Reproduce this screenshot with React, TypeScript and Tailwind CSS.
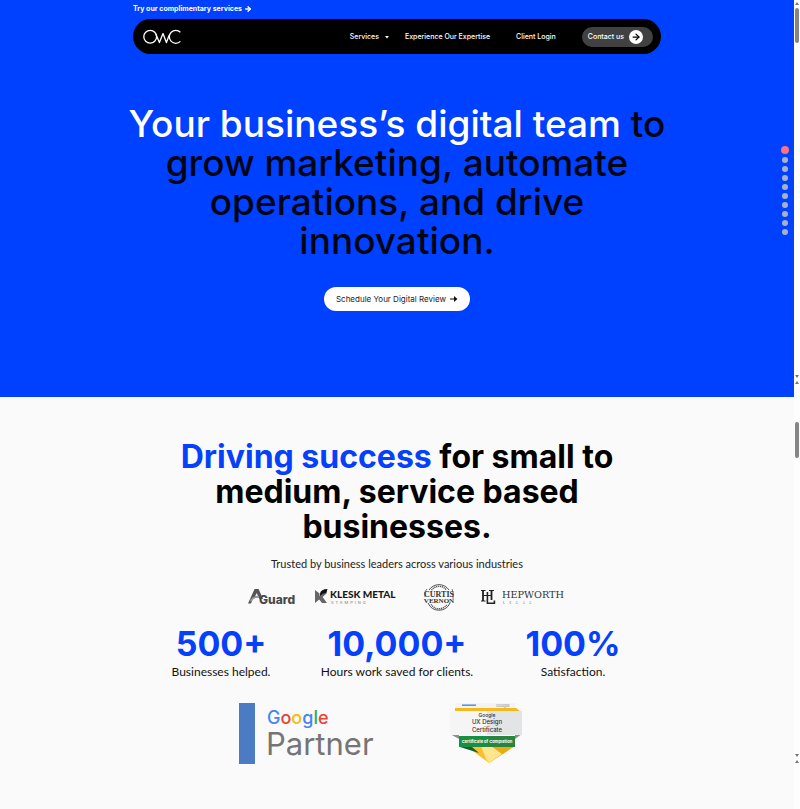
import React from "react";
import { ArrowRight } from "lucide-react";

const sans = "font-['Inter','Liberation_Sans',sans-serif]";
const lato = "font-['Lato','Liberation_Sans',sans-serif]";

function OwcLogo() {
  return (
    <svg viewBox="0 0 38 16" className="h-4 w-[38px]" fill="none" stroke="white" strokeWidth="1.3" role="img" aria-label="OWC">
      <circle cx="7.2" cy="7.8" r="6.4" />
      <path d="M12.8 5 L16.4 13.6 L20 4.6 L23.4 13.6 L26.3 6" strokeLinejoin="round" />
      <path d="M37.4 3.2 A6.5 6.5 0 1 0 37.4 12.4" />
    </svg>
  );
}

function AGuardLogo() {
  return (
    <svg viewBox="0 0 50 20" className="h-5 w-[50px] overflow-visible" role="img" aria-label="AGuard">
      <path d="M0 16.5 L6.6 2 H10.6 L15 12 H11.6 L10.6 10.5 H6.4 Q3.8 13 3 16.5 Z M7.2 9 H10 L8.8 6 Z" fill="#555" fillRule="evenodd" />
      <path d="M2 13 Q6 8 11 9 L11 11 Q6 10 3 15 Z" fill="#999" />
      <text x="11" y="16.6" fontSize="12" fontWeight="800" fill="#484848" className={sans}>Guard</text>
    </svg>
  );
}

function KleskLogo() {
  return (
    <svg viewBox="0 0 82 20" className="h-5 w-[82px] overflow-visible" role="img" aria-label="Klesk Metal Stamping">
      <path d="M0 3 L4.5 6.4 V9 L8 6 H12 L7.6 10 L12 16 H7 L4.2 12.4 L0 16 Z" fill="#666" />
      <path d="M5 6.6 Q6 2 12.5 2 L11.4 6 Q8 5.4 5 9 Z" fill="#111" />
      <text x="15" y="10.6" fontSize="10" fontWeight="900" fill="#181818" className={lato}>KLESK METAL</text>
      <text x="16" y="16.8" fontSize="4" letterSpacing="2" fill="#777" className={sans}>STAMPING</text>
    </svg>
  );
}

function CurtisLogo() {
  return (
    <svg viewBox="0 0 32 26" className="h-[26px] w-8 overflow-visible" role="img" aria-label="Curtis Vernon" fill="none" stroke="#555">
      <path d="M6 6 A12 12 0 0 1 26 6" />
      <path d="M8.5 6 A9.5 9.5 0 0 1 23.5 6" strokeWidth="1.4" strokeDasharray="1.2 .7" />
      <path d="M5 19 A12 12 0 0 0 27 19" />
      <path d="M8 20.4 A9.5 9.5 0 0 0 24 20.4" strokeWidth="1.4" strokeDasharray="1.2 .7" />
      <path d="M4 5 Q0 8 2 13 M29 5 Q31 8 30 15" strokeWidth=".8" />
      <g stroke="none" fill="#333" textAnchor="middle" fontWeight="700" className="font-['Liberation_Serif',serif]">
        <text x="16" y="12.6" fontSize="8">CURTIS</text>
        <text x="16" y="19" fontSize="7">VERNON</text>
      </g>
    </svg>
  );
}

function HepworthLogo() {
  return (
    <svg viewBox="0 0 86 20" className="h-5 w-[86px] overflow-visible" role="img" aria-label="Hepworth Legal">
      <g fill="none" stroke="#222">
        <path d="M3 3.5 V14 M11.5 3.5 V13" strokeWidth="1.8" />
        <path d="M3 8.5 H11 M1 3.5 H5.5 M9 3.5 H14 M1 14 H5.5" strokeWidth="1.2" />
        <path d="M7.4 5 V16.2 H14.4 V13.5" strokeWidth="1.6" />
      </g>
      <text x="22" y="11.4" fontSize="9.7" fill="#333" className="font-['DejaVu_Serif',serif]">HEPWORTH</text>
      <text x="23" y="17.4" fontSize="3" letterSpacing="4.6" fill="#666" className="font-['Liberation_Serif',serif]">LEGAL</text>
    </svg>
  );
}

function PartnerBadge() {
  return (
    <div className="flex h-[61px] w-[138px] gap-[11px]">
      <div className="w-4 shrink-0 bg-[#4a7bc3]" />
      <div className="flex flex-col">
        <span className="pt-1 pl-px text-[18px] leading-[22px] font-medium">
          <span className="text-[#4285f4]">G</span><span className="text-[#ea4335]">o</span><span className="text-[#fbbc05]">o</span><span className="text-[#4285f4]">g</span><span className="text-[#34a853]">l</span><span className="text-[#ea4335]">e</span>
        </span>
        <span className="text-[31px] leading-[30px] text-[#757575]">Partner</span>
      </div>
    </div>
  );
}

function CertificateBadge() {
  return (
    <svg viewBox="0 0 74 62" className="h-[62px] w-[74px]" role="img" aria-label="Google UX Design Certificate, Certificate of Completion">
      <path d="M6 1 H66 V6 H6 Z" fill="#f1f3f4" />
      <path d="M13 3.2 H27" stroke="#5c95e8" strokeWidth="1.6" />
      <text x="47" y="5" fontSize="4" fill="#888" className={sans}>Google</text>
      <path d="M6 6 H67 L71 9 H6 Z" fill="#f6b91c" />
      <path d="M17 44 H66 L40 61 Z" fill="#f9c02d" />
      <path d="M38 44 H66 L40 61 Z" fill="#e9aa19" />
      <path d="M32 44 H42 L53 52 L40 61 L37 57 Z" fill="#ffe58b" />
      <path d="M1 32 H10 V37 Z" fill="#8c9092" />
      <path d="M73 32 H66 V37 Z" fill="#8c9092" />
      <path d="M1 9 H73 V33 H1 Z" fill="#e3e4e6" />
      <path d="M1 9 H38 V33 H1 Z" fill="#f5f5f5" />
      <path d="M11 45 H23 L30 51 Z" fill="#12612c" />
      <path d="M10 34 H66 V45 H10 Z" fill="#188f43" />
      <path d="M38 34 H66 V45 H38 Z" fill="#29843e" />
      <g textAnchor="middle" fill="#333" fontWeight="500" className={sans}>
        <text x="38" y="15.2" fontSize="5">Google</text>
        <text x="38" y="22" fontSize="6">UX Design</text>
        <text x="38" y="29.6" fontSize="6">Certificate</text>
        <text x="38" y="41" fontSize="4.1" fill="white" fontWeight="700">Certificate of Completion</text>
      </g>
    </svg>
  );
}

function ReviewArrow() {
  return (
    <svg viewBox="0 0 8 8" className="size-2" aria-hidden="true">
      <path d="M0 4H5" stroke="#222" strokeWidth="1.1" />
      <path d="M4 1L7.5 4L4 7Z" fill="#111" />
    </svg>
  );
}

function Arrow({ down = false }: { down?: boolean }) {
  return (
    <svg viewBox="0 0 4 3" className="h-[3px] w-1 shrink-0" aria-hidden="true">
      <path d={down ? "M0 0H4L2 3Z" : "M0 3H4L2 0Z"} fill="#777" />
    </svg>
  );
}

function Scrollbar({ thumb }: { thumb: string }) {
  return (
    <div className="flex h-[376px] flex-col items-center" aria-hidden="true">
      <Arrow />
      <div className="flex-1">
        <div className={`w-1 rounded-full bg-[#858585] ${thumb}`} />
      </div>
      <Arrow down />
    </div>
  );
}

const stats = [
  { value: "500+", label: "Businesses helped." },
  { value: "10,000+", label: "Hours work saved for clients." },
  { value: "100%", label: "Satisfaction." },
];

const sections = ["Services", "Results", "Process", "Team", "Work", "Reviews", "Pricing", "News", "Questions"];

export default function App() {
  return (
    <div className={`flex min-h-screen bg-[#fafafa] ${sans}`}>
      <div className="min-w-0 flex-1">
        <header className="relative min-h-[397px] bg-[#0040ff] pb-[86px]">
          <div className="mx-auto w-full max-w-[528px]">
            <a href="#services" className="flex h-[19px] items-center gap-0.5 pb-px text-[7px] font-bold text-white">
              Try our complimentary services
              <ArrowRight className="size-2" strokeWidth={4} />
            </a>
            <nav className="flex h-[35px] items-center rounded-full bg-black px-2 text-[7px] font-medium text-white">
              <a href="#home" className="mr-auto ml-0.5"><OwcLogo /></a>
              <button className="flex items-center gap-1.5 pt-px">
                Services
                <svg viewBox="0 0 4 3" className="h-[3px] w-1" aria-hidden="true"><path d="M0 0H4L2 2.6Z" fill="white" /></svg>
              </button>
              <a href="#expertise" className="ml-4 pt-px">Experience Our Expertise</a>
              <a href="#login" className="ml-[26px] pt-px">Client Login</a>
              <a href="#contact" className="ml-[26px] flex h-5 items-center gap-[5px] rounded-full bg-[#414141] pr-2.5 pl-1.5">
                <span className="pt-px">Contact us</span>
                <span className="flex size-3.5 items-center justify-center rounded-full bg-white text-black">
                  <ArrowRight className="size-2.5" strokeWidth={3} />
                </span>
              </a>
            </nav>
          </div>
          <h1 className="mx-auto mt-[50px] max-w-[560px] text-center text-[37px] leading-[39px] font-medium text-[#030612]">
            <span className="text-white">Your business’s digital team</span> to<br />
            grow marketing, automate<br />operations, and drive<br />innovation.
          </h1>
          <div className="mt-[27px] flex justify-center">
            <button className="flex h-6 items-center gap-1 rounded-full bg-white px-3 text-[8px] text-[#222]">
              Schedule Your Digital Review <ReviewArrow />
            </button>
          </div>
          <nav aria-label="Page sections" className="absolute top-[146px] right-[5px] flex w-2 flex-col items-center gap-[3px]">
            <a href="#home" aria-label="Home" className="size-2 rounded-full bg-[#fb7185]" />
            {sections.map((name) => (
              <a key={name} href="#results" aria-label={name} className="size-1.5 rounded-full bg-[#a5b1c9]" />
            ))}
          </nav>
        </header>
        <main className="flex flex-col items-center pt-[42px] pb-10">
          <h2 className="text-center text-[32px] leading-[35px] font-bold text-black">
            <span className="text-[#0540fa]">Driving success</span> for small to<br />medium, service based<br />businesses.
          </h2>
          <p className={`mt-3 text-[11px] leading-4 text-[#222] ${lato}`}>Trusted by business leaders across various industries</p>
          <div className="mt-3 flex h-[26px] items-center pl-5">
            <AGuardLogo />
            <span className="w-[17px]" /><KleskLogo />
            <span className="w-[26px]" /><CurtisLogo />
            <span className="w-[25px]" /><HepworthLogo />
          </div>
          <dl className="mt-4 grid grid-cols-[176px_176px_176px]">
            {stats.map((s) => (
              <div key={s.value} className="flex flex-col-reverse items-center whitespace-nowrap">
                <dt className={`text-[12px] leading-5 text-[#111] ${lato}`}>{s.label}</dt>
                <dd className="text-[34px] leading-9 font-bold text-[#0540fa]">{s.value}</dd>
              </div>
            ))}
          </dl>
          <div className="mt-5 flex items-center gap-[72px] pr-8">
            <PartnerBadge />
            <CertificateBadge />
          </div>
        </main>
      </div>
      <aside className="flex w-1.5 shrink-0 flex-col items-center gap-[3px] bg-[#fdfdfd] pt-0.5">
        <Scrollbar thumb="mt-[3px] h-[35px]" />
        <Scrollbar thumb="mt-[38px] h-9" />
        <Arrow />
      </aside>
    </div>
  );
}
